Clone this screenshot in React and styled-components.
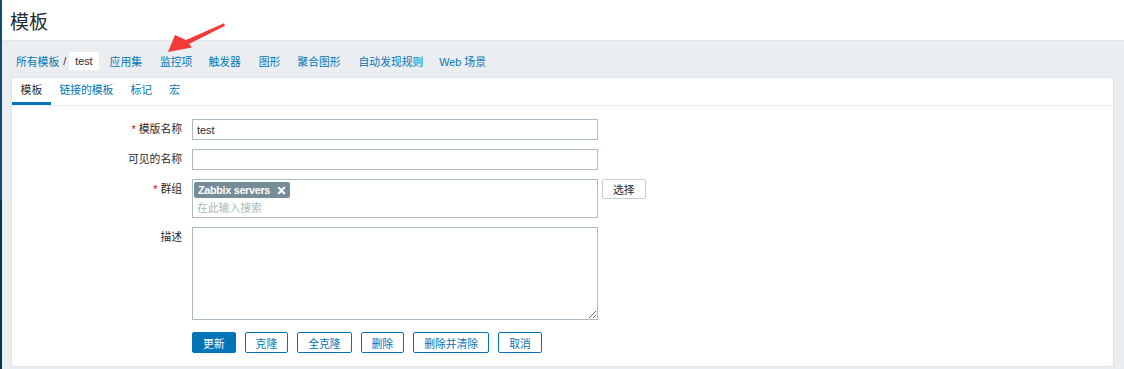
import React from 'react';
import styled, { createGlobalStyle } from 'styled-components';

const GlobalStyle = createGlobalStyle`
  body {
    margin: 0;
    font-family: "Liberation Sans", Arial, "Noto Sans CJK SC", sans-serif;
    font-size: 10.8px;
    color: #1f2c33;
    background: #ebeef0;
  }
`;

const Page = styled.div`
  position: relative;
  display: flex;
  height: 369px;
  overflow: hidden;
`;

const SideEdge = styled.div`
  width: 2px;
  flex-shrink: 0;
  background: linear-gradient(#0f4c72 0, #0f4c72 200px, #0a3350 200px, #0a3350 100%);
`;

const Main = styled.div`
  flex: 1;
  display: flex;
  flex-direction: column;
`;

const Header = styled.header`
  height: 40px;
  background: #fff;
  border-bottom: 1px solid #dfe4e7;
  display: flex;
  align-items: center;
  padding-left: 8px;
  h1 {
    margin: 0;
    font-size: 19px;
    font-weight: normal;
    color: #1f2c33;
  }
`;

const Content = styled.div`
  flex: 1;
  padding: 11px 10px 0 9px;
  background: #ebeef0;
`;

const NavBar = styled.nav`
  display: flex;
  align-items: center;
  height: 18px;
  margin-bottom: 7px;
  padding-left: 5px;
`;

const Crumbs = styled.div`
  display: flex;
  align-items: center;
  margin-right: 11px;
`;

const NavLink = styled.a`
  color: #0275b8;
  text-decoration: none;
  white-space: nowrap;
  margin-right: ${(p) => p.gap ?? 17}px;
`;

const Divider = styled.span`
  margin: 0 3px 0 4px;
  color: #1f2c33;
`;

const Current = styled.span`
  background: #fff;
  height: 18px;
  line-height: 18px;
  padding: 0 6px;
  color: #1f2c33;
`;

const Card = styled.section`
  background: #fff;
  border: 1px solid #dfe4e7;
  height: 288px;
`;

const Tabs = styled.ul`
  display: flex;
  margin: 0;
  padding: 0;
  list-style: none;
  height: 27px;
  border-bottom: 1px solid #ebeef0;
`;

const Tab = styled.li`
  padding: 0 8.6px;
  line-height: 24px;
  color: ${(p) => (p.active ? '#1f2c33' : '#0275b8')};
  border-bottom: 3px solid ${(p) => (p.active ? '#0275b8' : 'transparent')};
`;

const Form = styled.div`
  padding-top: 13px;
  display: flex;
  flex-direction: column;
  gap: 9px;
`;

const Row = styled.div`
  display: flex;
  align-items: flex-start;
`;

const Label = styled.label`
  width: 170px;
  margin-right: 10px;
  text-align: right;
  line-height: 21px;
  white-space: nowrap;
  &::before {
    content: ${(p) => (p.required ? '"* "' : '""')};
    color: #d40000;
  }
`;

const TextInput = styled.input`
  box-sizing: border-box;
  width: 406px;
  height: 21px;
  border: 1px solid #acbbc2;
  padding: 0 4px;
  font: inherit;
  color: #1f2c33;
  outline: none;
`;

const MultiSelect = styled.div`
  box-sizing: border-box;
  width: 406px;
  height: 39px;
  border: 1px solid #acbbc2;
  padding: 2px 1px 0;
`;

const Chip = styled.span`
  display: inline-flex;
  align-items: center;
  height: 16px;
  padding: 0 4px;
  background: #768d99;
  color: #fff;
  font-weight: bold;
  letter-spacing: -0.3px;
  border-radius: 2px;
  svg {
    margin-left: 7px;
  }
`;

const SearchInput = styled.input`
  display: block;
  border: 0;
  outline: none;
  padding: 0 3px;
  margin-top: 2px;
  height: 16px;
  width: 300px;
  font: inherit;
  &::placeholder {
    color: #acbbc2;
  }
`;

const SelectButton = styled.button`
  box-sizing: border-box;
  height: 20px;
  margin-left: 4px;
  padding: 0 10px;
  background: #fff;
  border: 1px solid #c6d0d5;
  border-radius: 2px;
  font: inherit;
  color: #1f2c33;
`;

const TextArea = styled.textarea`
  box-sizing: border-box;
  width: 406px;
  height: 93px;
  border: 1px solid #acbbc2;
  font: inherit;
  outline: none;
  resize: both;
`;

const Buttons = styled.div`
  display: flex;
  gap: 9px;
  margin-left: 180px;
  margin-top: 3px;
`;

const Button = styled.button`
  box-sizing: border-box;
  height: 21px;
  padding: 0 10px;
  border: 1px solid #0275b8;
  border-radius: 2px;
  background: ${(p) => (p.primary ? '#0275b8' : '#fff')};
  color: ${(p) => (p.primary ? '#fff' : '#0275b8')};
  font: inherit;
`;

const Arrow = styled.svg`
  position: absolute;
  left: 0;
  top: 0;
  pointer-events: none;
`;

const navItems = [
  ['应用集', 18],
  ['监控项', 16],
  ['触发器', 18],
  ['图形', 17],
  ['聚合图形', 18],
  ['自动发现规则', 16],
  ['Web 场景', 0],
];

const tabs = ['模板', '链接的模板', '标记', '宏'];

const actions = ['更新', '克隆', '全克隆', '删除', '删除并清除', '取消'];

export default function App() {
  return (
    <Page>
      <GlobalStyle />
      <SideEdge />
      <Main>
        <Header>
          <h1>模板</h1>
        </Header>
        <Content>
          <NavBar>
            <Crumbs>
              <NavLink gap={0}>所有模板</NavLink>
              <Divider>/</Divider>
              <Current>test</Current>
            </Crumbs>
            {navItems.map(([name, gap]) => (
              <NavLink key={name} gap={gap}>{name}</NavLink>
            ))}
          </NavBar>
          <Card>
            <Tabs>
              {tabs.map((t, i) => (
                <Tab key={t} active={i === 0}>{t}</Tab>
              ))}
            </Tabs>
            <Form>
              <Row>
                <Label required>模版名称</Label>
                <TextInput defaultValue='test' />
              </Row>
              <Row>
                <Label>可见的名称</Label>
                <TextInput />
              </Row>
              <Row>
                <Label required>群组</Label>
                <MultiSelect>
                  <Chip>
                    Zabbix servers
                    <svg width='9' height='9' viewBox='0 0 10 10'>
                      <path d='M2 2 L8 8 M8 2 L2 8' stroke='#fff' strokeWidth='2.4' strokeLinecap='round' />
                    </svg>
                  </Chip>
                  <SearchInput placeholder='在此输入搜索' />
                </MultiSelect>
                <SelectButton>选择</SelectButton>
              </Row>
              <Row>
                <Label>描述</Label>
                <TextArea />
              </Row>
              <Buttons>
                {actions.map((a, i) => (
                  <Button key={a} primary={i === 0}>{a}</Button>
                ))}
              </Buttons>
            </Form>
          </Card>
        </Content>
      </Main>
      <Arrow width='240' height='60' viewBox='0 0 240 60'>
        <polygon
          points='224,23.3 186,40 175,35 168,52 192,47.5 189,44 225,25.7'
          fill='#f23a3a'
        />
      </Arrow>
    </Page>
  );
}
